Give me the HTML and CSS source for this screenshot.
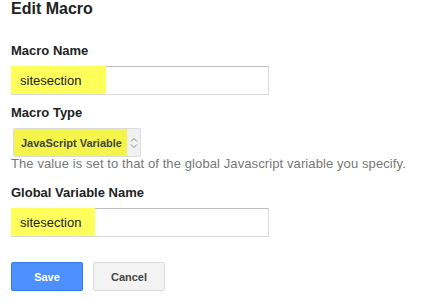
FILE: index.html
```html
<!DOCTYPE html>
<html lang="en">

<head>
    <meta charset="UTF-8">
    <meta name="viewport" content="width=device-width, initial-scale=1.0">
    <title>Edit Macro</title>
    <link rel="stylesheet" href="styles.css">
</head>

<body>
    <div class="container">
        <h1>Edit Macro</h1>

        <div class="field first">
            <label class="label">Macro Name</label>
            <div class="input">
                <span class="mark">sitesection</span>
            </div>
        </div>

        <div class="field">
            <label class="label">Macro Type</label>
            <div class="select">
                <span class="mark">JavaScript Variable</span>
                <span class="arrows">
                    <svg width="8" height="14" viewBox="0 0 8 14">
                        <path d="M1 5.5 L4 2.5 L7 5.5" fill="none" stroke="#8a8a8a" stroke-width="1"/>
                        <path d="M1 8.5 L4 11.5 L7 8.5" fill="none" stroke="#8a8a8a" stroke-width="1"/>
                    </svg>
                </span>
            </div>
            <div class="help">The value is set to that of the global Javascript variable you specify.</div>
        </div>

        <div class="field after-help">
            <label class="label">Global Variable Name</label>
            <div class="input">
                <span class="mark short">sitesection</span>
            </div>
        </div>

        <div class="buttons">
            <button class="button save">Save</button>
            <button class="button cancel">Cancel</button>
        </div>
    </div>
</body>
</html>
```

FILE: styles.css
```css
body {
    margin: 0;
    font-family: "Liberation Sans", Arial, sans-serif;
    background-color: #ffffff;
    color: #222222;
}

.container {
    padding: 0 11px;
}

h1 {
    margin: 0;
    font-size: 16px;
    line-height: 18px;
    font-weight: bold;
    color: #222222;
}

.field {
    margin-top: 10px;
}

.field.first {
    margin-top: 25px;
}

.field.after-help {
    margin-top: 14px;
}

.label {
    display: block;
    font-size: 13px;
    font-weight: bold;
    line-height: 16px;
    margin-bottom: 7px;
}

.input {
    display: flex;
    width: 256px;
    height: 27px;
    border: 1px solid #d9d9d9;
    border-top-color: #c0c0c0;
}

.input .mark {
    display: flex;
    align-items: center;
    width: 86px;
    padding-left: 9px;
    margin: -1px 0 0 -1px;
    height: 28px;
    background-color: #ffff5c;
    font-size: 13px;
}

.input .mark.short {
    width: 75px;
}

.select {
    display: inline-flex;
    height: 27px;
    margin-left: 2px;
    border: 1px solid #dcdcdc;
    background-color: #f1f1f1;
    border-radius: 2px;
}

.select .mark {
    display: flex;
    align-items: center;
    width: 106px;
    padding-left: 7px;
    background-color: #f4f44a;
    font-size: 11px;
    font-weight: bold;
    color: #444444;
}

.arrows {
    display: flex;
    align-items: center;
    padding: 0 2px 0 3px;
}

.help {
    font-size: 13px;
    line-height: 14px;
    letter-spacing: 0.1px;
    color: #777777;
}

.buttons {
    display: flex;
    gap: 10px;
    margin-top: 25px;
}

.button {
    width: 72px;
    height: 29px;
    padding: 0;
    font-family: "Liberation Sans", Arial, sans-serif;
    font-size: 11px;
    font-weight: bold;
    border-radius: 2px;
}

.save {
    background-color: #4d90fe;
    border: 1px solid #3079ed;
    color: #ffffff;
}

.cancel {
    background-color: #f3f3f3;
    border: 1px solid #dcdcdc;
    color: #444444;
}
```
